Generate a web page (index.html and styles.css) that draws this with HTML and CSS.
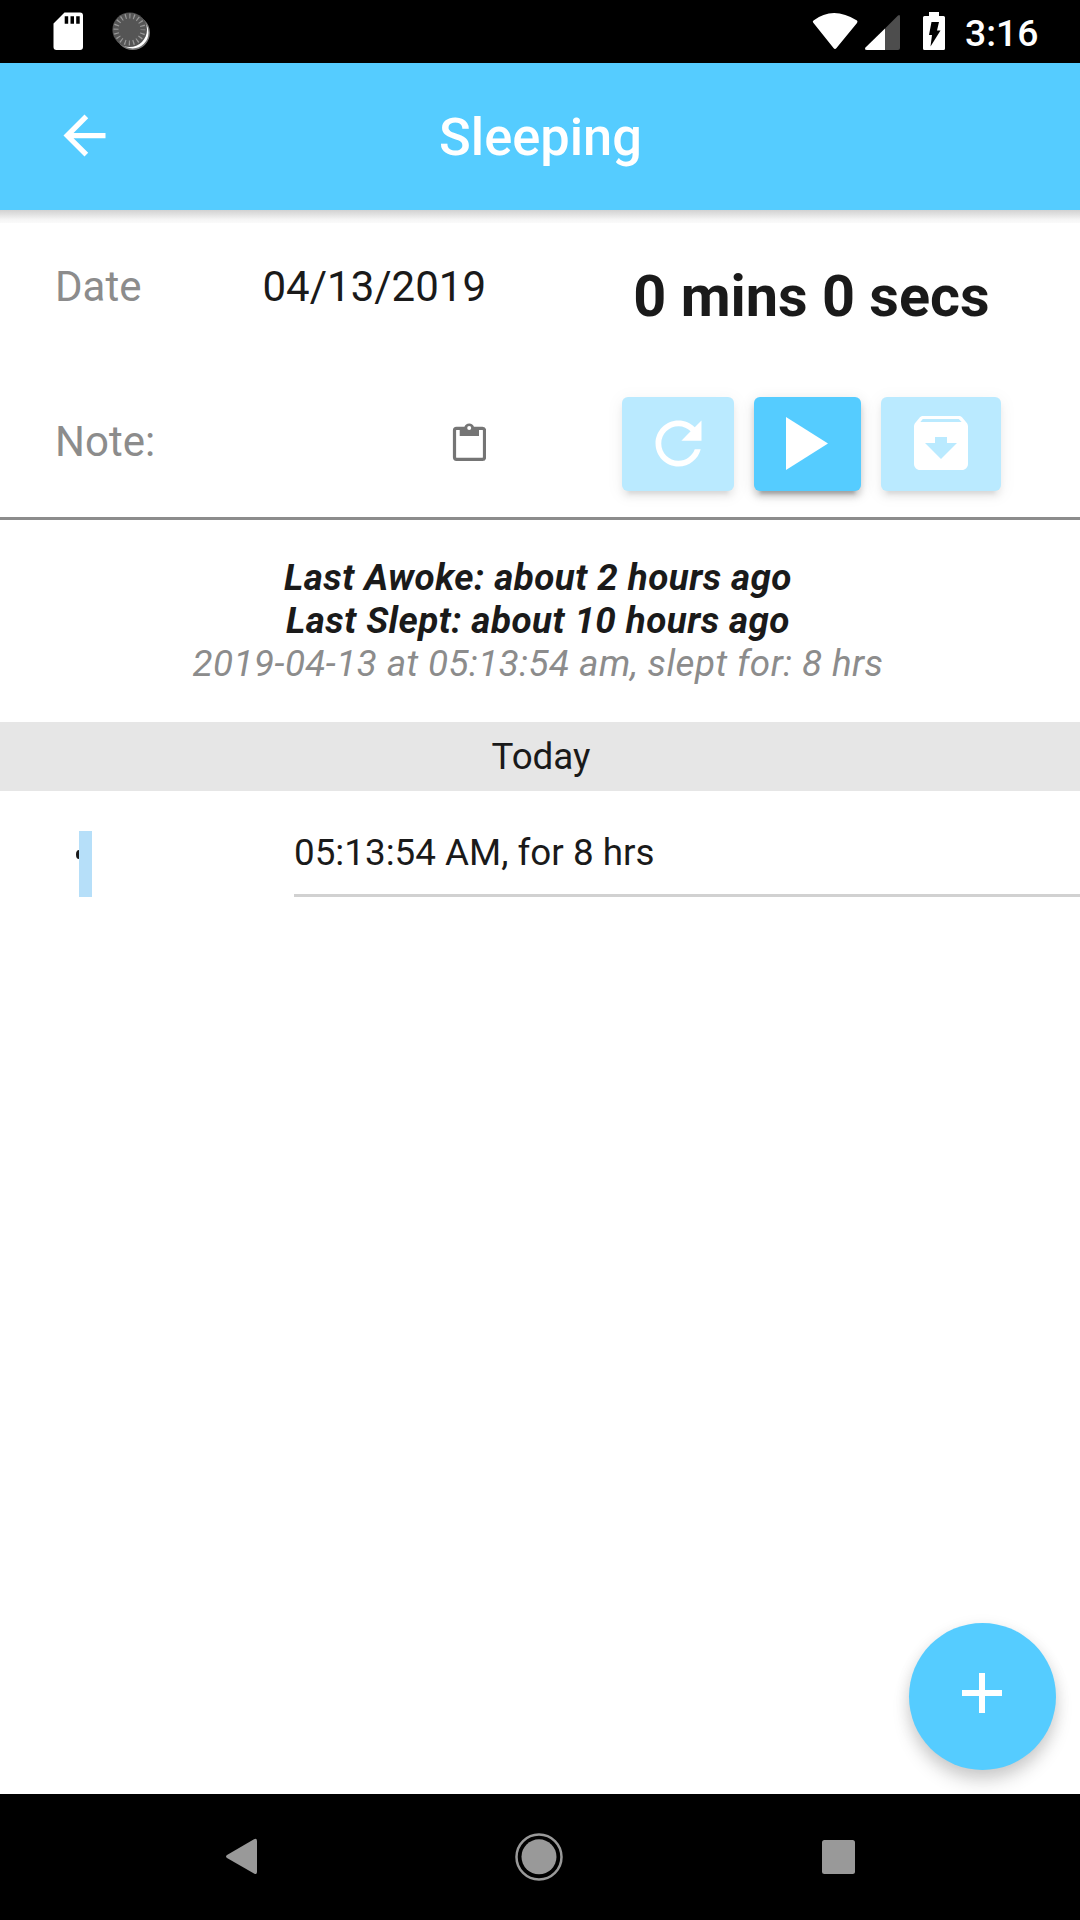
FILE: index.html
```html
<!DOCTYPE html>
<html lang="en">
<head>
<meta charset="utf-8">
<title>Sleeping</title>
<link rel="stylesheet" href="styles.css">
</head>
<body>
<div class="screen">
  <div class="status-bar">
    <svg class="status-icons" width="200" height="63" viewBox="0 0 200 63">
      <path fill="#fff" d="M64.5 12.5H80a3 3 0 0 1 3 3V47a3 3 0 0 1-3 3H56.500a3 3 0 0 1-3-3V23.500z"/>
      <path d="M64.700 16.300h3.500v7.500h-3.500zM70.500 16.300h3.500v7.500h-3.500zM76.200 16.300h3.500v7.500h-3.500z"/>
      <circle cx="132.700" cy="32.700" r="16.500" fill="#fff" stroke="#777" stroke-width="1.500"/>
      <circle cx="129.700" cy="29.700" r="17.300" fill="#555"/>
      <circle cx="129.500" cy="29.500" r="13.500" fill="none" stroke="#999" stroke-width="5" stroke-dasharray="1.200 3.041" stroke-dashoffset=".6"/>
    </svg>
    <div class="status-right">
      <svg width="135" height="63" viewBox="811 0 135 63">
        <path fill="#fff" d="M813.500 20.500Q833 5.500 857 20.500Q858 21.500 857 23L836.500 48Q835 50 833.500 48L813.500 23Q812 21.500 813.500 20.500z"/>
        <path fill="#4d4d4d" d="M885 28.500L898 15.500Q900 14 900 16.500V48q0 2-2 2H885z"/>
        <path fill="#fff" d="M885 28.500V50H867q-3 0-1.500-2.500z"/>
        <path fill="#fff" d="M929 12h10v4h4.500q1.500 0 1.500 1.500V48.500q0 1.500-1.500 1.500h-19q-1.500 0-1.500-1.500V17.500q0-1.500 1.500-1.500H929z"/>
        <path d="M931.500 22H939l-2 8.500h3.500L930.500 46.500l1.500-11.500h-3z"/>
      </svg>
      <span class="clock">3:16</span>
    </div>
  </div>

  <header class="toolbar">
    <svg class="back" width="63" height="63" viewBox="0 0 24 24"><path fill="#fff" d="M20 11H7.830l5.590-5.590L12 4l-8 8 8 8 1.410-1.410L7.830 13H20z"/></svg>
    <h1 class="title">Sleeping</h1>
  </header>
  <div class="toolbar-shadow"></div>

  <section class="entry">
    <div class="fields">
      <div class="field"><span class="label">Date</span><span class="date">04/13/2019</span></div>
      <div class="field"><span class="label">Note:</span>
        <svg class="clipboard" width="34" height="40" viewBox="452 422 34 40">
          <rect x="454.500" y="428.300" width="30" height="31" rx="2" fill="none" stroke="#757575" stroke-width="3.200"/>
          <path fill="#757575" d="M459.700 427H464.400a5 5 0 0 1 9.600 0H479v9H459.700z"/>
          <circle cx="469.200" cy="428" r="2" fill="#fff"/>
        </svg>
      </div>
    </div>
    <div class="timer">
      <div class="elapsed">0 mins 0 secs</div>
      <div class="buttons">
        <button class="btn reset disabled"><svg width="69" height="69" viewBox="0 0 24 24"><path fill="#fff" d="M17.650 6.350C16.200 4.900 14.210 4 12 4c-4.420 0-7.990 3.580-7.990 8s3.570 8 7.990 8c3.730 0 6.840-2.550 7.730-6h-2.080c-.82 2.330-3.040 4-5.650 4-3.310 0-6-2.690-6-6s2.690-6 6-6c1.660 0 3.140.69 4.220 1.780L13 11h7V4z"/></svg></button>
        <button class="btn play"><svg width="42" height="53" viewBox="0 0 42 53"><path fill="#fff" d="M0 0L42 26.500 0 53z"/></svg></button>
        <button class="btn save disabled"><svg width="72" height="72" viewBox="0 0 24 24"><path fill="#fff" fill-rule="evenodd" d="M20.540 5.230l-1.390-1.680C18.880 3.210 18.470 3 18 3H6c-.47 0-.88.21-1.160.55L3.460 5.230C3.170 5.570 3 6.020 3 6.500V19c0 1.100.9 2 2 2h14c1.100 0 2-.9 2-2V6.500c0-.48-.17-.93-.46-1.270zM12 17.330L6.670 12H10v-2h4v2h3.330zM5.120 5l.81-1h12l.94 1z"/></svg></button>
      </div>
    </div>
  </section>

  <section class="summary">
    <div class="strong">Last Awoke: about 2 hours ago</div>
    <div class="strong">Last Slept: about 10 hours ago</div>
    <div class="detail">2019-04-13 at 05:13:54 am, slept for: 8 hrs</div>
  </section>

  <h2 class="day">Today</h2>
  <div class="row">
    <div class="marker"><span class="dot"></span><span class="bar"></span></div>
    <div class="record">05:13:54 AM, for 8 hrs</div>
  </div>

  <div class="space">
    <button class="fab"><svg width="40" height="40" viewBox="0 0 40 40"><path fill="#fff" d="M17 0h6v17h17v6H23v17h-6V23H0v-6h17z"/></svg></button>
  </div>

  <nav class="nav-bar">
    <svg width="31" height="37" viewBox="0 0 31 37"><path fill="#999" d="M1 17L28 1.200Q31 0 31 3V34Q31 37 28 35.500L1 20Q-1 18.500 1 17z"/></svg>
    <svg width="48" height="48" viewBox="0 0 48 48"><circle cx="24" cy="24" r="22.500" fill="none" stroke="#999" stroke-width="2.500"/><circle cx="24" cy="23.800" r="17.500" fill="#999"/></svg>
    <svg width="33" height="34" viewBox="0 0 33 34"><rect width="33" height="34" rx="2.500" fill="#999"/></svg>
  </nav>
</div>
</body>
</html>
```
FILE: styles.css
```css
* { box-sizing: border-box; }
body { margin: 0; font-family: Roboto, sans-serif; color: #1a1a1a; background: #fff; }
svg { display: block; flex: none; }
button { border: 0; padding: 0; font: inherit; }

.screen { width: 1080px; height: 1920px; display: flex; flex-direction: column; overflow: hidden; }

.status-bar { height: 63px; flex: none; background: #000; display: flex; justify-content: space-between; }
.status-right { display: flex; width: 269px; }
.clock { margin-left: 19px; color: #fff; font-size: 37.300px; font-weight: 500; line-height: 67px; }

.toolbar { height: 147px; flex: none; background: #55ccff; display: grid; grid-template-columns: 116px 1fr 116px; align-items: center; }
.back { margin: 0 0 2px 52.500px; }
.title { margin: 0; text-align: center; color: #fff; font-size: 52.400px; font-weight: 500; line-height: 60px; padding: 0 0 0 1px; }
.toolbar-shadow { height: 13px; flex: none; background: linear-gradient(#d2d2d2, #e2e2e2 35%, #f6f6f6 75%, #fafafa); }

.entry { height: 297px; flex: none; display: flex; border-bottom: 3px solid #8c8c8c; }
.fields { width: 540px; padding: 39px 54px 0 55px; display: flex; flex-direction: column; gap: 105px; }
.field { height: 50px; display: flex; align-items: center; justify-content: space-between; font-size: 42px; line-height: 50px; }
.label { color: #8c8c8c; }
.clipboard { margin-top: -1px; }
.timer { width: 540px; padding: 39px 0 0 3px; display: flex; flex-direction: column; align-items: center; gap: 65px; }
.elapsed { font-size: 57.600px; font-weight: 700; line-height: 70px; }
.buttons { display: flex; gap: 20px; }
.btn { height: 94px; border-radius: 6px; background: #55ccff; display: flex; align-items: center; justify-content: center; box-shadow: 0 9px 3px -6px rgba(0,0,0,.2), 0 6px 6px rgba(0,0,0,.14), 0 3px 15px rgba(0,0,0,.12); }
.reset { width: 112px; }
.play { width: 107px; padding: 0 1px 1px 0; }
.save { width: 120px; padding-bottom: 2px; }
.reset svg { margin-bottom: 2px; }
.disabled { opacity: .4; }

.summary { height: 202px; flex: none; padding: 36px 4px 0 0; text-align: center; font-size: 36.800px; letter-spacing: .44px; line-height: 43px; font-style: italic; }
.strong { font-weight: 700; }
.detail { color: #8c8c8c; }

.day { margin: 0; height: 69px; flex: none; background: #e6e6e6; text-align: center; font-size: 36.800px; font-weight: 400; line-height: 69px; padding-left: 2px; }
.row { height: 106px; flex: none; display: grid; grid-template-columns: 294px 1fr; }
.marker { display: flex; padding: 40px 0 0 76px; }
.dot { width: 3px; height: 9px; margin-top: 19px; background: #1a1a1a; border-radius: 3px 0 0 3px / 4.500px 0 0 4.500px; }
.bar { width: 13px; height: 66px; background: #b6dff9; }
.record { border-bottom: 3px solid #d1d1d1; font-size: 36.800px; line-height: 43px; padding-top: 40px; }

.space { flex: 1; display: flex; justify-content: flex-end; align-items: flex-end; padding: 0 24px 24px 0; }
.fab { width: 147px; height: 147px; border-radius: 50%; background: #55ccff; display: flex; align-items: center; justify-content: center; padding: 0 1px 7px 0; box-shadow: 0 12px 18px rgba(0,0,0,.14), 0 4px 15px rgba(0,0,0,.1); }

.nav-bar { height: 126px; flex: none; background: #000; display: flex; justify-content: space-between; align-items: center; padding: 0 225.500px 1px 225.500px; }
```
